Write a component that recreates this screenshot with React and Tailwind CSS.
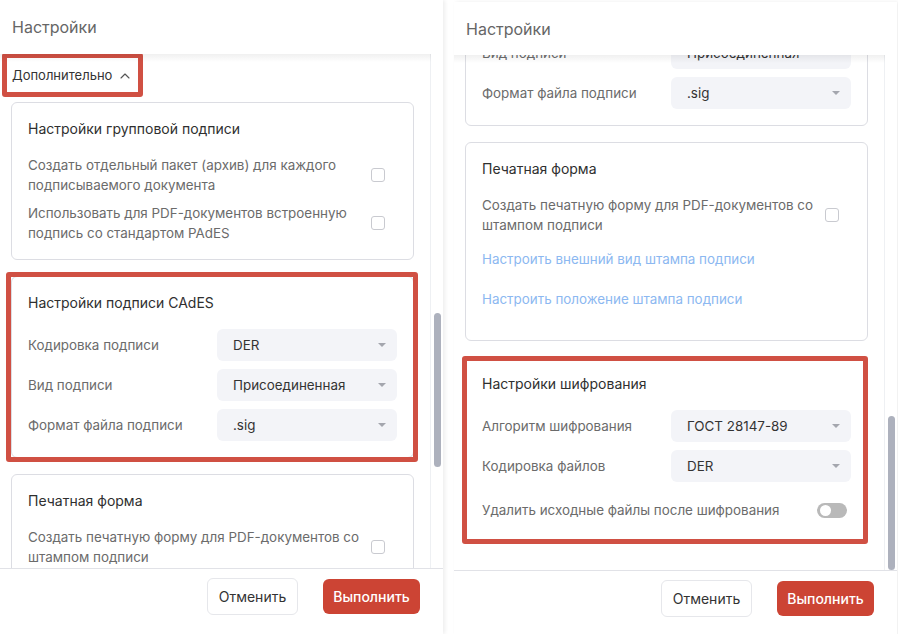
import React, { useLayoutEffect, useRef } from 'react';
import { ChevronUp } from 'lucide-react';

const Select = ({ value }) => (
  <div className="w-[180px] h-8 shrink-0 rounded-[6px] bg-[#f3f4f8] flex items-center justify-between pl-4 pr-[11px] text-[#333]">
    <span>{value}</span>
    <svg width="8" height="4" viewBox="0 0 8 4">
      <path d="M0 0h8L4 4z" fill="#a4a6ae" />
    </svg>
  </div>
);

const SelectRow = ({ label, value }) => (
  <div className="flex items-center justify-between h-8">
    <span className="text-[#6b6b6b]">{label}</span>
    <Select value={value} />
  </div>
);

const Checkbox = () => (
  <div className="w-[26px] shrink-0 flex justify-start">
    <span className="block w-[14px] h-[14px] rounded-[3px] border border-[#c9cad0] bg-white" />
  </div>
);

const CheckRow = ({ children }) => (
  <div className="flex items-center min-h-10">
    <p className="flex-1 mr-[4px] leading-5 text-[#6b6b6b]">{children}</p>
    <Checkbox />
  </div>
);

// красная рамка-пометка поверх карточки
const Mark = ({ className }) => (
  <div className={`absolute border-[5px] border-[#d05043] rounded-[3px] pointer-events-none ${className}`} />
);

const Card = ({ title, className = '', mark, children }) => (
  <div className={`relative rounded-[6px] border border-[#dcdde3] bg-white p-4 ${className}`}>
    <h3 className="text-[14px] text-[#2f2f2f] leading-5 mb-4">{title}</h3>
    {children}
    {mark}
  </div>
);

const Content = ({ highlight }) => (
  <div className="pl-[11px] pr-[16px] pb-[28px] text-[13.4px]">
    <div className="relative h-[44px] flex items-center gap-[5px] pl-px text-[13px] text-[#333]">
      <span>Дополнительно</span>
      <ChevronUp size={16} strokeWidth={1.7} className="text-[#555]" />
      {highlight === 'left' && <Mark className="-left-[9px] -top-px w-[141px] h-[44px]" />}
    </div>

    <div className="mt-1 flex flex-col gap-4">
      <Card title="Настройки групповой подписи">
        <div className="flex flex-col gap-2">
          <CheckRow>Создать отдельный пакет (архив) для каждого подписываемого документа</CheckRow>
          <CheckRow>Использовать для PDF-документов встроенную подпись со стандартом PAdES</CheckRow>
        </div>
      </Card>

      <Card
        title="Настройки подписи CAdES"
        mark={highlight === 'left' && <Mark className="-left-[6px] -top-[5px] -right-[5px] -bottom-[5px]" />}
      >
        <div className="flex flex-col gap-2">
          <SelectRow label="Кодировка подписи" value="DER" />
          <SelectRow label="Вид подписи" value="Присоединенная" />
          <SelectRow label="Формат файла подписи" value=".sig" />
        </div>
      </Card>

      <Card title="Печатная форма" className="pb-[25px]">
        <div className="flex flex-col gap-2">
          <CheckRow>Создать печатную форму для PDF-документов со штампом подписи</CheckRow>
          <a className="h-8 flex items-center text-[#8cb8f1]">Настроить внешний вид штампа подписи</a>
          <a className="h-8 flex items-center text-[#8cb8f1]">Настроить положение штампа подписи</a>
        </div>
      </Card>

      <Card
        title="Настройки шифрования"
        className="pb-3"
        mark={highlight === 'right' && <Mark className="-left-[4px] -top-[2px] -right-px -bottom-[2px]" />}
      >
        <div className="flex flex-col gap-2">
          <SelectRow label="Алгоритм шифрования" value="ГОСТ 28147-89" />
          <SelectRow label="Кодировка файлов" value="DER" />
          <div className="h-10 flex items-center justify-between">
            <span className="text-[#6b6b6b]">Удалить исходные файлы после шифрования</span>
            <span className="relative block w-[30px] h-[15px] mr-1 rounded-full bg-[#b9b9b9]">
              <span className="absolute left-[3px] top-[2px] w-[11px] h-[11px] rounded-full bg-white" />
            </span>
          </div>
        </div>
      </Card>
    </div>
  </div>
);

const Panel = ({ scroll, thumbTop, highlight, headerH, className = '' }) => {
  const ref = useRef(null);

  useLayoutEffect(() => {
    if (ref.current) ref.current.scrollTop = scroll;
  }, [scroll]);

  return (
    <div className={`w-[443px] h-[634px] shrink-0 flex flex-col bg-white shadow-[2px_0_4px_rgba(0,0,0,0.07)] ${className}`}>
      <header className={`${headerH} shrink-0 flex items-center pl-3 text-[16px] text-[#666]`}>Настройки</header>

      <div className="relative flex-1 min-h-0 flex">
        <div className="absolute top-0 left-0 w-[431px] h-2 z-10 pointer-events-none bg-gradient-to-b from-black/[0.06] to-transparent" />
        <div ref={ref} className="w-[431px] shrink-0 overflow-y-auto [scrollbar-width:none] border-r border-[#eef0f3]">
          <Content highlight={highlight} />
        </div>
        <div className="relative flex-1">
          <div className="absolute left-[3px] w-[7px] h-[154px] rounded-full bg-[#adb1bd]" style={{ top: thumbTop }} />
        </div>
      </div>

      <footer className="h-[66px] shrink-0 border-t border-[#e1e2e7] flex justify-end items-start gap-[25px] pt-[9px] pr-[23px] text-[14px]">
        <button className="w-[91px] h-[37px] rounded-[6px] border border-[#e6e7eb] bg-white text-[#333]">Отменить</button>
        <button className="w-[97px] h-[35px] mt-px rounded-[6px] bg-[#cc4434] text-white font-medium">Выполнить</button>
      </footer>
    </div>
  );
};

export default function App() {
  return (
    <div className="w-[898px] h-[634px] overflow-hidden bg-white flex gap-[11px] font-['Inter','Noto_Sans',sans-serif]">
      <Panel scroll={0} thumbTop={259} highlight="left" headerH="h-[54px]" />
      <Panel scroll={333} thumbTop={361} highlight="right" headerH="h-[53px]" className="mt-[2px]" />
    </div>
  );
}
